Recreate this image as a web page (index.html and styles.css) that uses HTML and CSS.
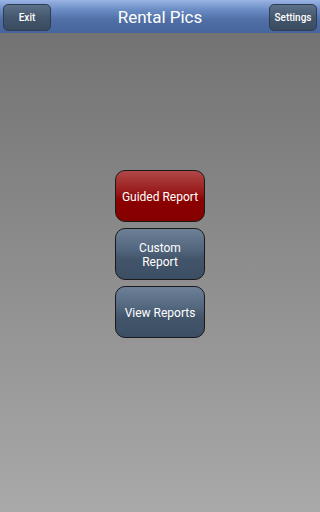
FILE: index.html
```html
<!DOCTYPE html>
<html>
<head>
<meta charset="utf-8">
<link rel="stylesheet" href="styles.css">
</head>
<body>
<div class="app">
  <header class="topbar">
    <button class="bar-btn">Exit</button>
    <h1 class="title">Rental Pics</h1>
    <button class="bar-btn">Settings</button>
  </header>
  <main class="content">
    <div class="menu">
      <button class="menu-btn red">Guided Report</button>
      <button class="menu-btn slate">Custom<br>Report</button>
      <button class="menu-btn slate">View Reports</button>
    </div>
  </main>
</div>
</body>
</html>
```
FILE: styles.css
```css
html, body {
  margin: 0;
  padding: 0;
  width: 320px;
  height: 512px;
  overflow: hidden;
  font-family: Roboto, "Liberation Sans", sans-serif;
}
.app {
  display: flex;
  flex-direction: column;
  height: 512px;
}
.topbar {
  height: 33px;
  flex: none;
  display: flex;
  align-items: center;
  justify-content: space-between;
  padding: 0 3px;
  box-sizing: border-box;
  background: linear-gradient(to bottom, #9ab4e4 0%, #6a8cc4 30%, #4f6fa6 60%, #46659c 100%);
}
.title {
  margin: 0;
  font-size: 17px;
  font-weight: normal;
  color: #ffffff;
  padding-top: 1px;
}
.bar-btn {
  width: 48px;
  height: 27px;
  margin-top: 1px;
  border: 1px solid #2e3d52;
  border-radius: 5px;
  background: linear-gradient(to bottom, #5c7088 0%, #44576d 50%, #3a4b60 100%);
  color: #ffffff;
  font-family: Roboto, "Liberation Sans", sans-serif;
  font-size: 10px;
  font-weight: 500;
  padding: 0;
}
.content {
  flex: 1;
  display: flex;
  justify-content: center;
  background: linear-gradient(to bottom, #737373 0%, #a9a9a9 100%);
}
.menu {
  margin-top: 137px;
  display: flex;
  flex-direction: column;
  gap: 6px;
}
.menu-btn {
  width: 90px;
  height: 52px;
  border: 1px solid #1a1a1a;
  border-radius: 10px;
  color: #ffffff;
  font-family: Roboto, "Liberation Sans", sans-serif;
  font-size: 12px;
  line-height: 14px;
  padding: 2px 0 0;
}
.red {
  background: linear-gradient(to bottom, #b04848 0%, #9a1c1c 40%, #8a0000 60%, #860000 100%);
}
.slate {
  background: linear-gradient(to bottom, #6d8096 0%, #53677f 40%, #42556b 60%, #3c4e63 100%);
}
```
